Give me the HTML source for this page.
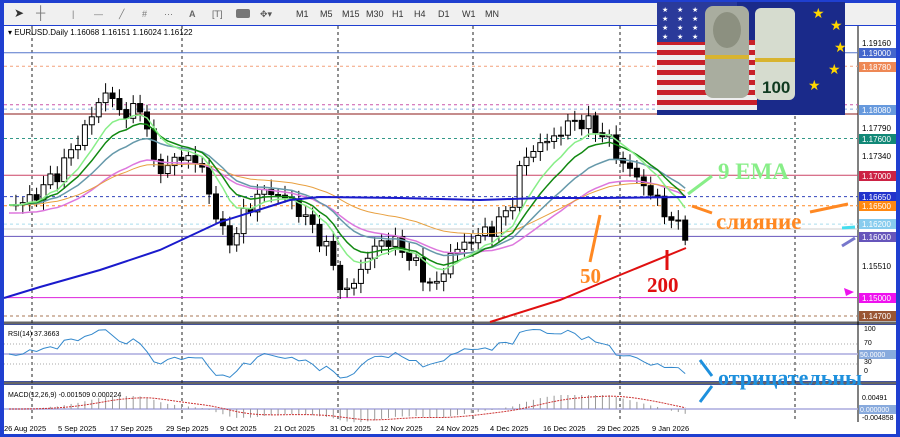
<!DOCTYPE html>
<html><head><meta charset="utf-8"><style>
*{margin:0;padding:0;box-sizing:border-box}
body{width:900px;height:437px;overflow:hidden;background:#1f3fd0;font-family:"Liberation Sans",sans-serif;position:relative}
#tb{position:absolute;left:4px;top:3px;width:892px;height:22px;background:#f0f0f0;font-size:9px;color:#333}
#tb span{position:absolute;top:6px}
svg{position:absolute;left:0;top:0}
</style></head><body>
<div id="tb">
<span style="left:10px;font-size:12px;top:3px">➤</span>
<span style="left:32px;font-size:13px;top:2px;color:#777">┼</span>
<span style="left:68px;color:#777">|</span>
<span style="left:90px;color:#777">—</span>
<span style="left:115px;color:#777">╱</span>
<span style="left:138px;color:#777">#</span>
<span style="left:160px;color:#777">⋯</span>
<span style="left:185px;font-weight:bold;color:#666">A</span>
<span style="left:208px;color:#666">[T]</span>
<span style="left:232px;width:14px;height:9px;background:#777;border-radius:2px"></span>
<span style="left:256px;color:#555">✥▾</span>
<span style="left:292px">M1</span><span style="left:316px">M5</span><span style="left:338px">M15</span><span style="left:362px">M30</span><span style="left:388px">H1</span><span style="left:410px">H4</span><span style="left:434px">D1</span><span style="left:458px">W1</span><span style="left:481px">MN</span>
</div>
<svg id="s" width="900" height="437" xmlns="http://www.w3.org/2000/svg"></svg>
<script>
var s=document.getElementById('s'),o='';
function L(x1,y1,x2,y2,c,w,d){o+='<line x1="'+x1+'" y1="'+y1+'" x2="'+x2+'" y2="'+y2+'" stroke="'+c+'" stroke-width="'+(w||1)+'"'+(d?' stroke-dasharray="'+d+'"':'')+'/>';}
function R(x,y,w,h,f,st){o+='<rect x="'+x+'" y="'+y+'" width="'+w+'" height="'+h+'" fill="'+f+'"'+(st?' stroke="'+st+'"':'')+'/>';}
function T(x,y,t,c,sz,ex){o+='<text x="'+x+'" y="'+y+'" fill="'+c+'" font-size="'+sz+'" '+(ex||'')+'>'+t+'</text>';}
R(4,26,854,296,'#fff');R(858,26,38,296,'#fff');
R(4,325,854,56,'#fff');R(858,325,38,56,'#fff');
R(4,385,854,37,'#fff');R(858,385,38,37,'#fff');
R(4,422,892,12,'#fff');
L(4,323,896,323,'#666',3);L(4,383,896,383,'#666',3);
L(858,26,858,422,'#000');
[32,182,338,473,620,795].forEach(function(x){L(x,26,x,422,'#222',1,'3,3')});
function Y(p){return 43+(1.1916-p)/0.0001634;}
var hl=[[1.19,'#5577cc',''],[1.1878,'#f4a07a','3,3'],[1.1815,'#cc55aa','3,3'],[1.1808,'#88aadd','3,3'],[1.18,'#8b1a1a',''],[1.176,'#339988','3,3'],[1.17,'#cc4466',''],[1.1665,'#3344bb','3,3'],[1.165,'#ff8822','3,3'],[1.162,'#aaddee','3,3'],[1.1612,'#ccc',''],[1.16,'#6655bb',''],[1.15,'#dd22dd',''],[1.147,'#aa7755','3,3']];
hl.forEach(function(h){L(4,Y(h[0]),858,Y(h[0]),h[1],1,h[2]||null);});
var kp=[[9,205],[30,200],[60,170],[90,120],[105,90],[120,112],[145,110],[155,175],[165,165],[190,155],[205,175],[220,232],[235,240],[245,210],[265,190],[290,200],[315,230],[330,255],[345,298],[360,270],[380,240],[400,245],[415,265],[435,290],[450,255],[470,240],[490,230],[510,210],[520,170],[530,150],[550,140],[575,120],[590,125],[605,135],[620,160],[640,180],[660,205],[675,225],[686,232]];
var N=99,c=[];
function X(i){return 9+i*6.9;}
for(var i=0;i<N;i++){var x=X(i);for(var k=0;k<kp.length-1;k++)if(x>=kp[k][0]&&x<=kp[k+1][0]+0.01){var t=(x-kp[k][0])/(kp[k+1][0]-kp[k][0]);c[i]=kp[k][1]+t*(kp[k+1][1]-kp[k][1])+9*Math.sin(i*2.9)*Math.cos(i*0.9);break;}if(c[i]===undefined)c[i]=232;}
for(i=1;i<N;i++){var op=c[i-1],cl=c[i],hi=Math.min(op,cl)-4-6*Math.abs(Math.sin(i*1.7)),lo=Math.max(op,cl)+4+6*Math.abs(Math.cos(i*1.3));
L(X(i),hi,X(i),lo,'#000');var y1=Math.min(op,cl),y2=Math.max(op,cl);R(X(i)-2.5,y1,5,Math.max(1,y2-y1),cl<op?'#fff':'#000','#000');}
function ema(n){var r=[],a=2/(n+1),v=c[0];for(var i=0;i<N;i++){v=a*c[i]+(1-a)*v;r.push(v);}return r;}
function pl(a,col,w,off){var p='';for(var i=0;i<N;i++)p+=X(i)+','+(a[i]+(off||0))+' ';o+='<polyline points="'+p+'" fill="none" stroke="'+col+'" stroke-width="'+w+'"/>';}
pl(ema(30),'#dd77dd',1.5,8);pl(ema(45),'#e8a040',1,0);
pl(ema(20),'#6699aa',1.5);pl(ema(12),'#118811',1.5);pl(ema(8),'#88ee88',1.5);
o+='<polyline points="4,298 40,287 100,270 160,250 220,222 290,200 320,197 400,198 480,200 540,198 600,198 686,197" fill="none" stroke="#1a1acc" stroke-width="2"/>';
o+='<polyline points="490,322 560,300 620,275 686,248" fill="none" stroke="#e01010" stroke-width="2"/>';
T(862,46,'1.19160','#000',8);T(862,131,'1.17790','#000',8);T(862,159,'1.17340','#000',8);T(862,269,'1.15510','#000',8);
var lb=[[53,'#4466cc','1.19000'],[67,'#ee8855','1.18780'],[110,'#6699dd','1.18080'],[139,'#118877','1.17600'],[176,'#cc2244','1.17000'],[197,'#2233cc','1.16650'],[206,'#ff8811','1.16500'],[224,'#88ccee','1.16200'],[237,'#6655bb','1.16000'],[298,'#ee11ee','1.15000'],[316,'#995533','1.14700']];
lb.forEach(function(l){R(859,l[0]-5,37,10,l[1]);T(862,l[0]+3,l[2],'#fff',8);});
T(8,35,'▾ EURUSD.Daily  1.16068 1.16151 1.16024 1.16122','#000',8);
R(657,2,188,113,'#1a2a8a');
for(var j=0;j<7;j++){R(657,40+j*10,100,5,'#c8202a');R(657,45+j*10,100,5,'#eee');}
R(657,2,80,40,'#2a3a9a');
for(j=0;j<4;j++)for(k=0;k<5;k++)T(662+k*15,12+j*9,'★','#fff',7);
o+='<rect x="705" y="6" width="44" height="92" rx="8" fill="#a9ad9f"/><rect x="755" y="8" width="40" height="92" rx="6" fill="#d6dccf"/>';
o+='<ellipse cx="727" cy="30" rx="14" ry="18" fill="#8c9080"/>';
T(762,93,'100','#103a20',17,'font-weight="bold"');
R(705,55,44,4,'#d8b430');R(755,58,40,4,'#d8b430');
[[812,18],[830,30],[834,52],[828,74],[808,90]].forEach(function(p){T(p[0],p[1],'★','#ffd700',14)});
T(8,336,'RSI(14) 37.3663','#000',7);
L(4,344,858,344,'#aaa',1,'1,2');L(4,364,858,364,'#aaa',1,'1,2');L(4,354,858,354,'#aad',1.5);
T(864,331,'100','#000',7);T(864,345,'70','#000',7);T(864,364,'30','#000',7);T(864,373,'0','#000',7);
R(859,350,37,9,'#88aadd');T(860,357,'50.0000','#fff',7);
var e20=ema(20),rp='';for(i=0;i<N;i++)rp+=X(i)+','+(354+(c[i]-e20[i])*0.35+Math.sin(i*1.3)*1.5)+' ';
o+='<polyline points="'+rp+'" fill="none" stroke="#3388cc" stroke-width="1"/>';
T(8,397,'MACD(12,26,9) -0.001509 0.000224','#000',7);
L(4,409,858,409,'#aad',1.5);
var e1=ema(12),e2=ema(26),mp='';
function cl2(v){return Math.max(-14,Math.min(14,v));}
var mv=[];for(i=0;i<N;i++)mv.push(cl2((e2[i]-e1[i])*0.5));
var sg=[],v=0;for(i=0;i<N;i++){v=0.2*mv[i]+0.8*v;sg.push(v);}
for(i=0;i<N;i++){L(X(i),409,X(i),409-mv[i],'#999',1);mp+=X(i)+','+(409-sg[i])+' ';}
o+='<polyline points="'+mp+'" fill="none" stroke="#cc3333" stroke-width="1" stroke-dasharray="2,1"/>';
T(862,400,'0.00491','#000',7);T(862,420,'-0.004858','#000',7);
R(859,405,37,9,'#88aadd');T(860,412,'0.000000','#fff',7);
var ds=[[4,'26 Aug 2025'],[58,'5 Sep 2025'],[110,'17 Sep 2025'],[166,'29 Sep 2025'],[220,'9 Oct 2025'],[274,'21 Oct 2025'],[330,'31 Oct 2025'],[380,'12 Nov 2025'],[436,'24 Nov 2025'],[490,'4 Dec 2025'],[543,'16 Dec 2025'],[597,'29 Dec 2025'],[652,'9 Jan 2026']];
ds.forEach(function(d){T(d[0],431,d[1],'#000',7.5)});
T(718,179,'9 EMA','#88ee88',23,'font-family="Liberation Serif" font-weight="bold"');
L(712,176,688,194,'#88ee88',3);
T(716,229,'слияние','#ff8822',23,'font-family="Liberation Serif" font-weight="bold"');
L(712,213,692,206,'#ff8822',3);L(810,212,848,204,'#ff8822',3);
L(842,228,855,227,'#44ddee',3);L(842,246,855,238,'#7777cc',3);
o+='<path d="M844,288 L854,292 L846,296Z" fill="#ee11ee"/>';
T(580,283,'50','#ff8822',21,'font-family="Liberation Serif" font-weight="bold"');L(590,262,600,215,'#ff8822',3);
T(647,292,'200','#e01010',21,'font-family="Liberation Serif" font-weight="bold"');L(667,270,667,250,'#e01010',3);
T(718,385,'отрицательны','#1e90dd',22,'font-family="Liberation Serif" font-weight="bold"');
L(712,376,700,360,'#1e90dd',3);L(712,386,700,402,'#1e90dd',3);
s.innerHTML=o;
</script>
</body></html>
